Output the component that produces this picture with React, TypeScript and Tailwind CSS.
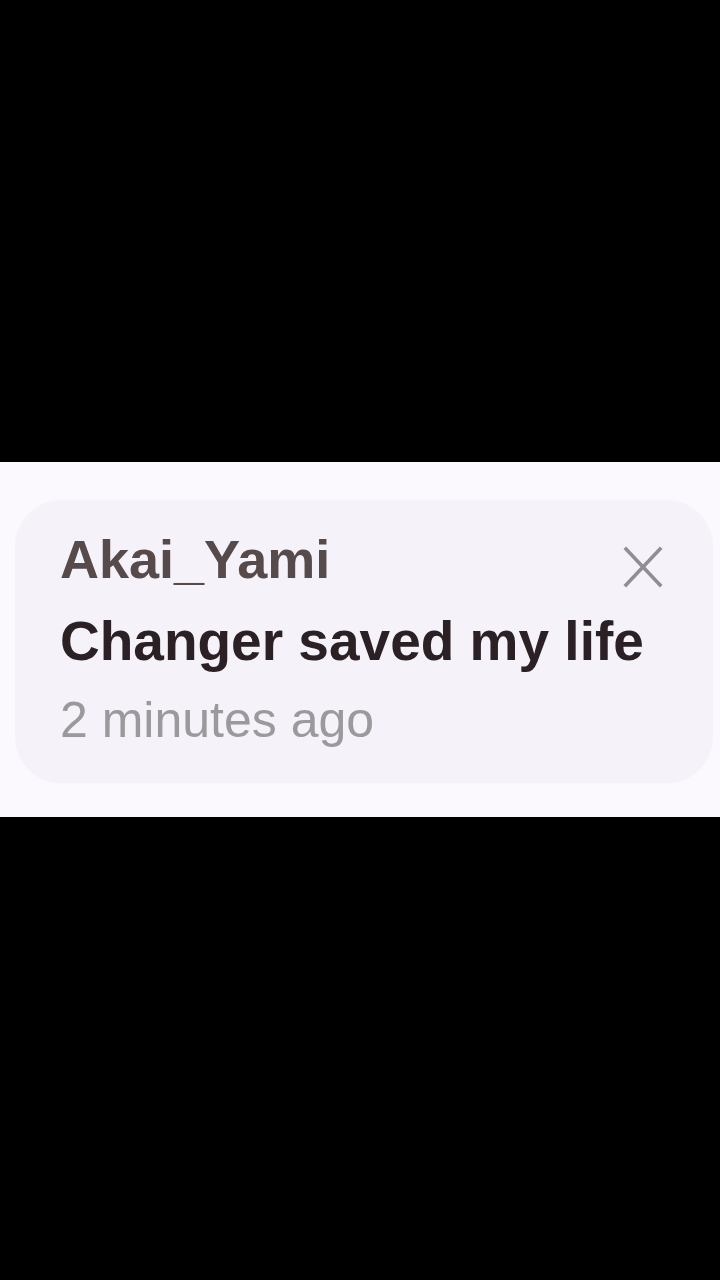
export default function App() {
    return (
        <div className="min-h-[1280px] bg-black pt-[462px]" style={{ fontFamily: '"Liberation Sans", Arial, sans-serif' }}>
            {/* Notification band */}
            <div className="h-[355px] bg-[#fbf9fd] pl-[15px] pr-[7px] pt-[38px]">
                <div className="relative h-[283px] rounded-[46px] bg-[#f5f2f9] pl-[45px] pt-[32px] flex flex-col">
                    <p className="text-[54px] leading-[54px] font-bold text-[#574a4b] whitespace-nowrap">Akai_Yami</p>
                    <p className="mt-[28px] text-[55px] leading-[54px] font-bold text-[#2b2125] whitespace-nowrap">Changer saved my life</p>
                    <p className="mt-[27px] text-[50px] leading-[50px] text-[#9b999c] whitespace-nowrap">2 minutes ago</p>

                    {/* Close button */}
                    <button className="absolute right-[50px] top-[45px] h-[44px] w-[40px] flex items-center justify-center">
                        <svg width="40" height="44" viewBox="0 0 40 44" fill="none" stroke="#8f8e92" strokeWidth="3.5" strokeLinecap="square">
                            <path d="M3 4 L37 40" />
                            <path d="M37 4 L3 40" />
                        </svg>
                    </button>
                </div>
            </div>
        </div>
    )
}
